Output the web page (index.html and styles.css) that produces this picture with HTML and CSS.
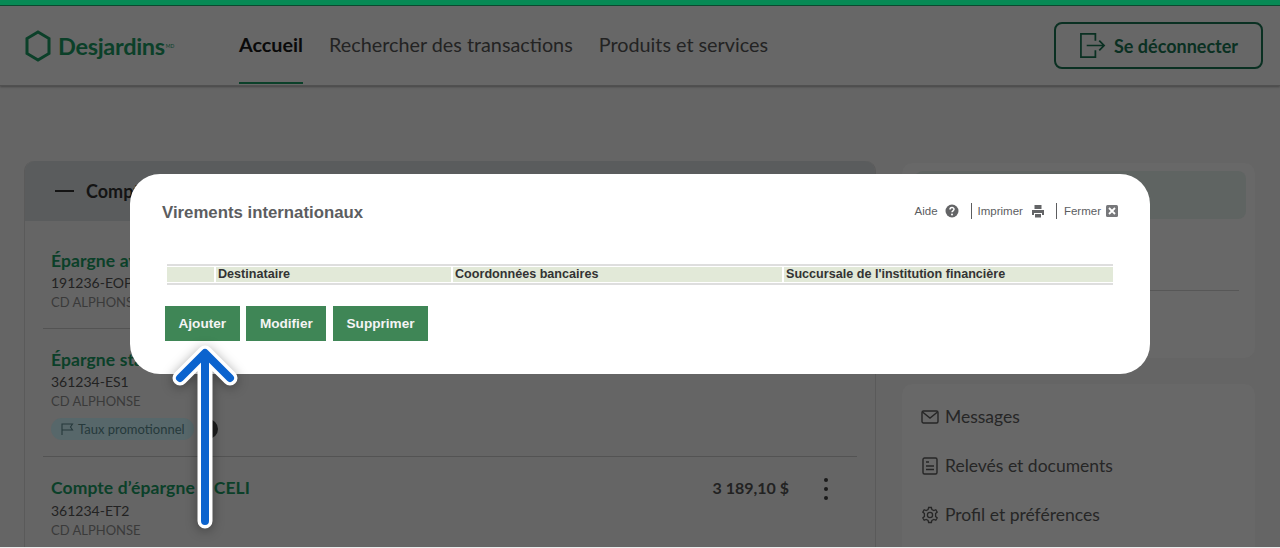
FILE: index.html
```html
<!DOCTYPE html>
<html lang="fr">
<head>
  <meta charset="UTF-8">
  <meta name="viewport" content="width=device-width, initial-scale=1">
  <title>Virements internationaux</title>
  <link rel="stylesheet" href="styles.css">
</head>
<body>

  <!-- Barre du haut -->
  <header class="topbar">
    <div class="logo">
      <svg class="logo-mark" width="26" height="32" viewBox="0 0 26 32"><path d="M13 2 L24 8.5 V23.5 L13 30 L2 23.5 V8.5 Z" fill="none" stroke="#0b4029" stroke-width="3"/></svg>
      <span class="logo-name">Desjardins</span><span class="logo-md">MD</span>
    </div>
    <nav class="nav">
      <a class="nav-link active">Accueil</a>
      <a class="nav-link">Rechercher des transactions</a>
      <a class="nav-link">Produits et services</a>
    </nav>
    <button class="logout">
      <svg width="27" height="27" viewBox="0 0 28 28" fill="none" stroke="#0a3022" stroke-width="1.8"><path d="M17 9 V2 H2 V26 H17 V19"/><path d="M8 14 H26 M21 9 L26 14 L21 19"/></svg>
      Se déconnecter
    </button>
  </header>

  <main class="content">
    <section class="accounts">
      <div class="accounts-head"><span class="dash"></span>Comptes</div>
      <div class="account first">
        <div class="account-info">
          <div class="account-name">Épargne avantage</div>
          <div class="account-id">191236-EOP</div>
          <div class="account-owner">CD ALPHONSE</div>
        </div>
      </div>
      <div class="account">
        <div class="account-info">
          <div class="account-name">Épargne stable</div>
          <div class="account-id">361234-ES1</div>
          <div class="account-owner">CD ALPHONSE</div>
          <div class="promo-row">
            <span class="promo">
              <svg width="14" height="14" viewBox="0 0 14 14" fill="none" stroke="#26393b" stroke-width="1.1"><path d="M2 13 V2 H12.5 L10.5 5 L12.5 8 H2"/></svg>
              Taux promotionnel
            </span>
            <span class="info-dot"></span>
          </div>
        </div>
      </div>
      <div class="account">
        <div class="account-info">
          <div class="account-name">Compte d’épargne – CELI</div>
          <div class="account-id">361234-ET2</div>
          <div class="account-owner">CD ALPHONSE</div>
        </div>
        <div class="account-amount">3 189,10 $</div>
        <div class="kebab"><i></i><i></i><i></i></div>
      </div>
    </section>

    <aside class="side">
      <div class="side-card top">
        <div class="side-box"></div>
        <div class="side-line"></div>
      </div>
      <div class="side-card links">
        <a class="side-link">
          <svg width="18" height="18" viewBox="0 0 18 18" fill="none" stroke="#262626" stroke-width="1.4"><rect x="1" y="3" width="16" height="12" rx="1.5"/><path d="M1.5 4 L9 10 L16.5 4"/></svg>
          Messages
        </a>
        <a class="side-link">
          <svg width="18" height="18" viewBox="0 0 18 18" fill="none" stroke="#262626" stroke-width="1.4"><rect x="2" y="1" width="14" height="16" rx="1.5"/><path d="M5 5 H8 M5 9 H13 M5 12.500 H13"/></svg>
          Relevés et documents
        </a>
        <a class="side-link">
          <svg width="18" height="18" viewBox="0 0 18 18" fill="none" stroke="#262626" stroke-width="1.3"><circle cx="9" cy="9" r="2.6"/><path d="M7.600 1.500 H10.400 L10.900 3.600 L12.800 4.500 L14.800 3.700 L16.200 6.100 L14.600 7.500 V10.500 L16.200 11.900 L14.800 14.300 L12.800 13.500 L10.900 14.400 L10.400 16.500 H7.600 L7.100 14.400 L5.200 13.500 L3.200 14.300 L1.800 11.900 L3.400 10.500 V7.500 L1.800 6.100 L3.200 3.700 L5.200 4.500 L7.100 3.600 Z"/></svg>
          Profil et préférences
        </a>
      </div>
    </aside>
  </main>

  <!-- Fenetre par dessus la page -->
  <div class="modal">
    <div class="modal-head">
      <h1>Virements internationaux</h1>
      <div class="tools">
        <span class="tool tool-aide">Aide
          <svg width="14" height="14" viewBox="0 0 14 14"><circle cx="7" cy="7" r="6.500" fill="#636466"/><path d="M5 5.500 C5 3 9 3 9 5.300 C9 6.800 7 6.800 7 8.200" fill="none" stroke="#fff" stroke-width="1.500"/><circle cx="7" cy="10.500" r="1" fill="#fff"/></svg>
        </span>
        <span class="tool tool-print">Imprimer
          <svg width="14" height="14" viewBox="0 0 14 14"><path d="M3.500 1 H10.500 V5 H3.500 Z M1 6 H13 V11 H11 V9 H3 V11 H1 Z M4 10 H10 V13.500 H4 Z" fill="#636466"/></svg>
        </span>
        <span class="tool tool-close">Fermer
          <svg width="12" height="12" viewBox="0 0 12 12"><rect width="12" height="12" rx="1.500" fill="#76777a"/><path d="M3 3 L9 9 M9 3 L3 9" stroke="#fff" stroke-width="1.800"/></svg>
        </span>
      </div>
    </div>
    <table class="table">
      <thead>
        <tr>
          <th class="col-empty"></th>
          <th class="col-dest">Destinataire</th>
          <th class="col-coord">Coordonnées bancaires</th>
          <th class="col-branch">Succursale de l'institution financière</th>
        </tr>
      </thead>
    </table>
    <div class="actions">
      <button class="action">Ajouter</button>
      <button class="action">Modifier</button>
      <button class="action">Supprimer</button>
    </div>
  </div>

  <svg class="arrow" width="80" height="200" viewBox="0 0 80 200" fill="none" stroke-linecap="round" stroke-linejoin="round">
    <path d="M40 181 V14 M15 38 L40 13 L65 38" stroke="#fff" stroke-width="15"/>
    <path d="M40 181 V14 M15 38 L40 13 L65 38" stroke="#0b63ce" stroke-width="8"/>
  </svg>

</body>
</html>
```

FILE: styles.css
```css
html {
  height: 548px;
  background: #ececec;
  overflow: hidden;
}
body {
  position: relative;
  margin: 0;
  height: 547px;
  overflow: hidden;
  background: #656565;
  font-family: 'Lato', sans-serif;
  color: #222;
}
.topbar {
  height: 79px;
  border-top: 5px solid #078a55;
  box-shadow: inset 0 1px 0 #0b4a30, 0 1px 2px #444;
  border-bottom: 1px solid #505050;
  display: flex;
  align-items: center;
  padding: 1px 17px 0 25px;
  background: #676767;
}
.logo {
  display: flex;
  align-items: center;
  width: 214px;
}
.logo-mark {
  margin-right: 7px;
}
.logo-name {
  font-size: 23.5px;
  font-weight: 700;
  color: #0b4029;
  letter-spacing: -0.3px;
}
.logo-md {
  font-size: 5px;
  color: #0b4029;
  margin-left: 1px;
}
.nav {
  display: flex;
  gap: 26px;
  height: 100%;
  flex: 1;
}
.nav-link {
  display: flex;
  align-items: center;
  font-size: 19.8px;
  color: #232323;
  border-bottom: 2px solid transparent;
  margin-bottom: 1px;
}
.nav-link.active {
  color: #0a0a0a;
  font-weight: 700;
  border-bottom-color: #0b4029;
}
.logout {
  display: flex;
  align-items: center;
  justify-content: center;
  gap: 8px;
  width: 209px;
  height: 47px;
  background: none;
  border: 2px solid #0a3022;
  border-radius: 8px;
  font-family: inherit;
  font-size: 18px;
  font-weight: 700;
  color: #0a3022;
}

.content {
  display: grid;
  grid-template-columns: 852px 353px;
  gap: 26px;
  height: 462px;
  box-sizing: border-box;
  padding: 75px 0 0 24px;
  overflow: hidden;
}
.accounts {
  background: #656565;
  border-left: 1px solid #5a5a5a;
  border-right: 1px solid #5a5a5a;
  border-radius: 10px 10px 0 0;
}
.accounts-head {
  display: flex;
  align-items: center;
  height: 60px;
  padding-left: 30px;
  background: #5a5c5d;
  border-radius: 10px 10px 0 0;
  font-size: 18px;
  font-weight: 700;
  color: #141414;
}
.dash {
  width: 19px;
  height: 2px;
  background: #141414;
  margin-right: 12px;
}
.account {
  display: flex;
  align-items: flex-start;
  margin: 0 18px;
  padding: 20px 8px 16px;
  border-bottom: 1px solid #535353;
}
.account.first {
  padding-top: 29px;
  padding-bottom: 17px;
}
.account:last-child .account-id {
  margin-top: 2px;
}
.account-info {
  flex: 1;
}
.account-name {
  font-size: 17.5px;
  font-weight: 700;
  letter-spacing: 0.1px;
  color: #0b4029;
  line-height: 22px;
}
.account-id {
  font-size: 14px;
  color: #222;
  line-height: 20px;
  margin-top: 1px;
}
.account-owner {
  font-size: 13px;
  color: #3a3a3a;
  line-height: 18px;
}
.promo-row {
  display: flex;
  align-items: center;
  gap: 4px;
  margin-top: 8px;
}
.promo {
  display: flex;
  align-items: center;
  gap: 4px;
  height: 22px;
  padding: 0 9px;
  border-radius: 11px;
  background: #57676a;
  font-size: 13px;
  color: #26393b;
}
.info-dot {
  width: 20px;
  height: 20px;
  border-radius: 50%;
  background: #1c1c1c;
}
.account-amount {
  font-size: 16px;
  font-weight: 700;
  color: #222;
  margin-right: 35px;
  line-height: 22px;
}
.kebab {
  display: flex;
  flex-direction: column;
  gap: 5px;
  margin: 1px 21px 0 0;
}
.kebab i {
  width: 4px;
  height: 4px;
  border-radius: 50%;
  background: #1a1a1a;
}

.side {
  display: flex;
  flex-direction: column;
  gap: 26px;
  padding-top: 2px;
}
.side-card {
  background: #686868;
  border-radius: 10px;
}
.side-card.top {
  height: 195px;
  box-sizing: border-box;
  padding: 8px 9px 0 13px;
}
.side-box {
  height: 48px;
  border-radius: 8px;
  background: #5f6462;
}
.side-line {
  height: 1px;
  margin: 71px 7px 0 0;
  background: #575757;
}
.side-card.links {
  height: 200px;
  padding: 8px 19px;
  display: flex;
  flex-direction: column;
}
.side-link {
  display: flex;
  align-items: center;
  gap: 6px;
  height: 49px;
  font-size: 17.5px;
  color: #262626;
}

.modal {
  position: absolute;
  left: 130px;
  top: 174px;
  width: 1020px;
  height: 200px;
  background: #fff;
  border-radius: 30px;
  font-family: 'Liberation Sans', Arial, sans-serif;
}
.modal-head {
  display: flex;
  justify-content: space-between;
  align-items: flex-start;
  padding: 29px 32px 0;
}
.modal-head h1 {
  margin: 0;
  font-size: 16.8px;
  line-height: 19px;
  font-weight: 700;
  color: #5c5d5f;
}
.tools {
  display: flex;
  font-size: 11.5px;
  color: #5c5d5f;
}
.tool {
  display: flex;
  align-items: center;
  gap: 7px;
  height: 16px;
}
.tool-aide {
  padding-right: 12px;
}
.tool-print {
  border-left: 1px solid #5c5d5f;
  padding: 0 11px 0 6px;
  gap: 8px;
}
.tool-close {
  border-left: 1px solid #5c5d5f;
  padding-left: 7px;
  gap: 5px;
}
.table {
  margin: 42px 0 0 37px;
  width: 946px;
  border-collapse: separate;
  border-spacing: 0;
  border-top: 2px solid #dedede;
  border-bottom: 2px solid #dedede;
  table-layout: fixed;
  font-size: 12.6px;
  line-height: 15px;
  color: #333;
  padding: 1px 0;
}
.table th {
  height: 15px;
  padding: 0 0 0 2px;
  background: #e2e9d8;
  border-left: 2px solid #fff;
  text-align: left;
}
.table .col-empty {
  width: 47px;
  border-left: none;
  box-sizing: border-box;
}
.col-dest {
  width: 233px;
}
.col-coord {
  width: 327px;
}
.col-branch {
  width: 327px;
}
.actions {
  display: flex;
  gap: 6.800px;
  margin: 21px 0 0 35px;
}
.action {
  height: 35px;
  padding: 0 13.500px;
  background: #3f8656;
  border: none;
  font-family: inherit;
  font-size: 13.6px;
  font-weight: 700;
  color: #f4f4f4;
}
.arrow {
  position: absolute;
  left: 165px;
  top: 340px;
  filter: drop-shadow(0 2px 6px rgba(0,0,0,0.35));
}
```
